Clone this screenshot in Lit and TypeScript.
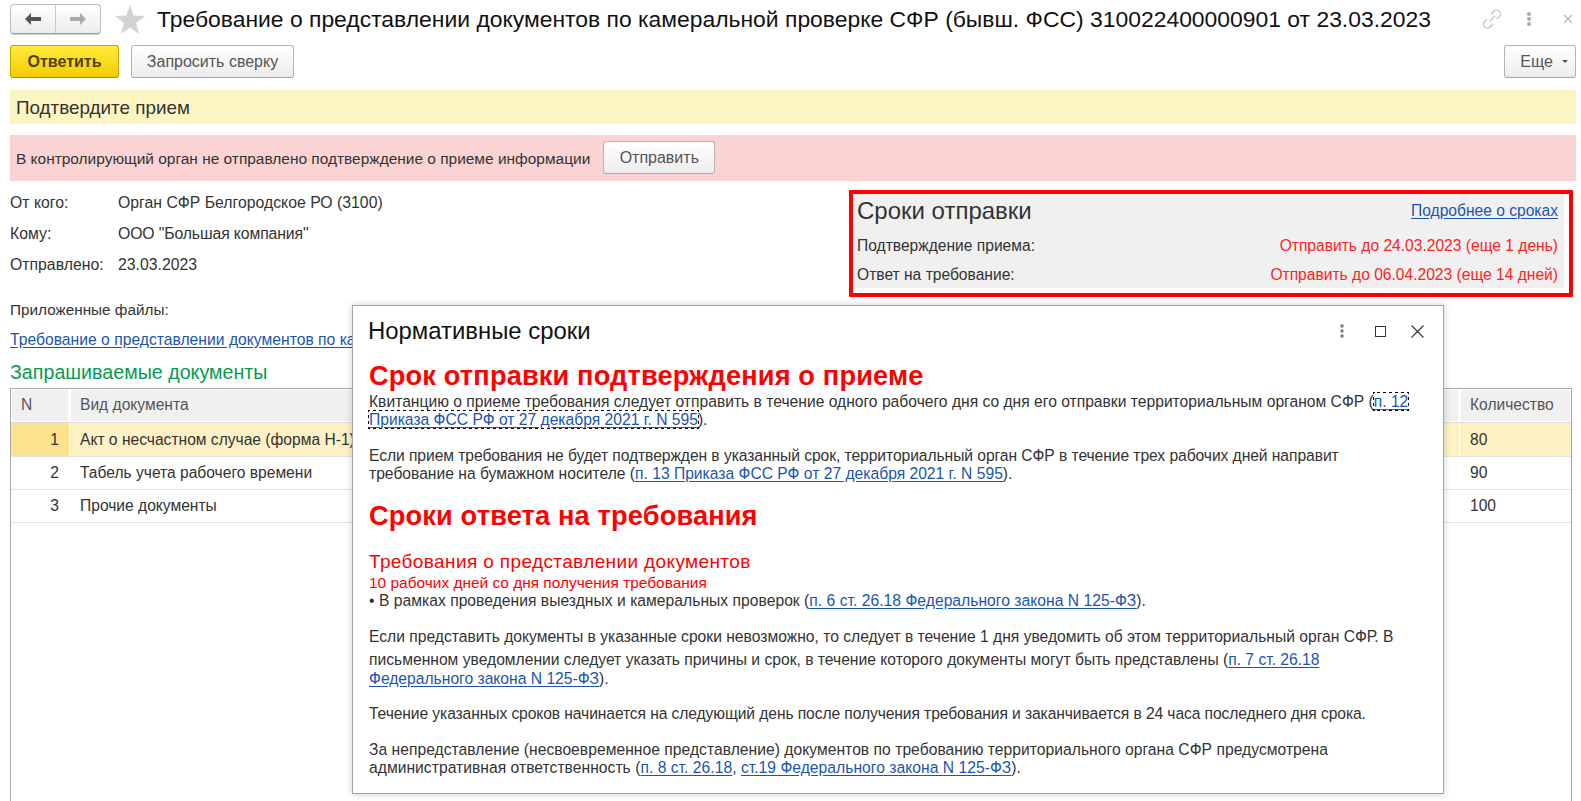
import { LitElement, html, css } from "lit";
import { customElement } from "lit/decorators.js";

@customElement("app-root")
export class AppRoot extends LitElement {
  static styles = css`
    :host { display: block; position: relative; width: 1581px; height: 801px; overflow: hidden; background: #fff; font-family: "Liberation Sans", Arial, sans-serif; color: #333; font-size: 15.6px; }
    .page { display: flex; flex-direction: column; height: 801px; padding: 4px 5px 0 10px; box-sizing: border-box; }
    a { color: #1b55b0; text-decoration: underline; text-underline-offset: 2px; }
    .titlebar { display: flex; align-items: center; height: 30px; }
    .nav { display: flex; width: 91px; height: 30px; box-sizing: border-box; border: 1px solid #bcbcbc; border-bottom-color: #a0a0a0; border-radius: 4px; background: linear-gradient(#fff, #ececec); box-shadow: 0 1px 0 #ccc; }
    .nav span { flex: 1; display: flex; align-items: center; justify-content: center; }
    .nav span + span { border-left: 1px solid #c8c8c8; }
    .star { margin-left: 14px; }
    .title { margin-left: 12px; font-size: 22.9px; color: #111; white-space: nowrap; flex: 1; }
    .ticons { display: flex; align-items: center; margin-right: 3px; }
    .ticons .dots { margin: 0 31px 0 24px; }
    .actions { display: flex; align-items: center; gap: 12px; margin-top: 11px; height: 33px; }
    .btn { box-sizing: border-box; height: 33px; display: flex; align-items: center; justify-content: center; border: 1px solid #b5b5b5; border-bottom-color: #a5a5a5; border-radius: 3px; background: linear-gradient(#fff, #ededed); color: #555; font-size: 16px; }
    .btn.primary { width: 109px; background: linear-gradient(#ffec3d, #f2cc00); border-color: #c4a400; border-bottom-color: #a88c00; color: #4d4300; font-weight: 700; }
    .btn.req { width: 163px; }
    .btn.send { width: 112px; height: 33px; margin-top: -2px; }
    .btn.more { width: 72px; gap: 9px; margin-left: auto; padding-left: 8px; }
    .caret { width: 0; height: 0; border-left: 3px solid transparent; border-right: 3px solid transparent; border-top: 3px solid #555; }
    .confirm { margin-top: 12px; height: 34px; box-sizing: border-box; display: flex; align-items: center; padding: 1px 0 0 6px; background: #fdf5c1; font-size: 18.85px; }
    .warn { margin-top: 11px; height: 46px; box-sizing: border-box; display: flex; align-items: center; padding: 1px 0 0 6px; gap: 13px; background: #fbd3d3; font-size: 15.46px; }
    .mid { display: flex; justify-content: space-between; margin-top: 6px; height: 110px; }
    .fields { display: grid; grid-template-columns: 108px auto; grid-auto-rows: 31px; align-items: center; align-content: start; font-size: 15.8px; }
    .quoted { letter-spacing: -.13px; }
    .deadline { width: 724px; height: 107px; box-sizing: border-box; border: 4px solid #f00; border-radius: 1px; background: #fff; margin: 3px 3px 0 0; padding: 0 5px 5px 1px; }
    .deadline-in { height: 100%; background: #f0f0f0; padding: 0 6px 0 3px; display: grid; grid-template-columns: auto auto; justify-content: space-between; align-items: center; grid-template-rows: 33px 37px 22px; font-size: 15.6px; }
    .deadline h3 { margin: 0; font-weight: 400; font-size: 24px; }
    .deadline a { justify-self: end; }
    .red { color: #f22; text-align: right; }
    .files { margin-top: 4px; font-size: 15.3px; line-height: 18px; }
    .attach { margin-top: 11px; line-height: 20px; height: 20px; font-size: 15.7px; white-space: nowrap; }
    .section { margin-top: 11px; color: #069a50; font-size: 19.66px; line-height: 22px; }
    .table { flex: 1; margin: 5px 4px 0 0; box-sizing: border-box; border: 1px solid #a8a8a8; border-bottom: 0; font-size: 15.6px; }
    .row { display: grid; grid-template-columns: 58px 1fr 112px; height: 33px; box-sizing: border-box; border-bottom: 1px solid #e2e2e2; align-items: stretch; }
    .row > div { display: flex; align-items: center; padding-left: 10px; }
    .row > div + div { border-left: 1px solid #fff; }
    .row.head { height: 34px; border-bottom: 1px solid #d8d8d8; color: #555; }
    .row.head > div { background: #f0f0f0; box-shadow: inset 0 0 0 1px #fff; padding-bottom: 2px; }
    .row > .num { justify-content: flex-end; padding: 0 10px 0 0; }
    .row.head > .num { justify-content: flex-start; padding: 0 0 2px 10px; }
    .row.sel { height: 34px; }
    .row.sel > div { background: #fdf1c5; }
    .row.sel > .num { background: #fde28e; }
    .modal { position: absolute; left: 352px; top: 305px; width: 1092px; height: 489px; box-sizing: border-box; padding: 0 15px 0 16px; background: #fff; border: 1px solid #a6a6a6; box-shadow: 0 0 7px rgba(0,0,0,.2); font-size: 15.65px; line-height: 18px; color: #333; }
    .mhead { display: flex; align-items: center; height: 50px; }
    .mhead .mtitle { flex: 1; margin-left: -1px; font-size: 23.9px; color: #111; }
    .micons { display: flex; align-items: center; margin-right: 4px; }
    .micons .dots { margin-right: 30px; }
    .micons .max { margin-right: 25px; }
    h2 { margin: 0; color: #f00; font-size: 27.2px; line-height: 33px; font-weight: 700; letter-spacing: .15px; }
    .h1a { margin: 3px 0 1px; }
    p { margin: 0; white-space: nowrap; }
    .gap { margin-top: 18px; }
    .h1b { margin-top: 16px; }
    .sub { margin-top: 19px; color: #f00; font-size: 19px; line-height: 22px; letter-spacing: .38px; }
    .redline { color: #f00; font-size: 15.45px; line-height: 19px; }
    .tall { margin-top: 17px; line-height: 20px; }
    .tall span { display: block; }
    .tall .l2 { margin-top: 3px; }
    .tall .l3 { margin-top: -1px; }
    .after-tall { margin-top: 16px; }
    .tighter { letter-spacing: -.07px; }
    .tightest { letter-spacing: -.1px; }
    .wider { letter-spacing: .03px; }
    .focus { outline: 1px dotted #000; }
  `;

  render() {
    return html`
      <div class="page">
        <div class="titlebar">
          <div class="nav">
            <span><svg width="18" height="14" viewBox="0 0 18 14"><path d="M1 7l6-6v4h10v4H7v4z" fill="#555"/></svg></span>
            <span><svg width="18" height="14" viewBox="0 0 18 14"><path d="M17 7l-6-6v4H1v4h10v4z" fill="#aaa"/></svg></span>
          </div>
          <svg class="star" width="30" height="29" viewBox="0 0 30 29"><path d="M15 0l3.700 10.600L30 11l-9 6.900L24.300 29 15 22.500 5.700 29 9 17.900 0 11l11.300-.4z" fill="#d3d3d3"/></svg>
          <div class="title">Требование о представлении документов по камеральной проверке СФР (бывш. ФСС) 310022400000901 от 23.03.2023</div>
          <div class="ticons">
            <svg width="20" height="20" viewBox="0 0 20 20" fill="none" stroke="#c4c4c4" stroke-width="1.300"><path d="M8 12l5-5"/><path d="M9 5l2.500-2.500a3.500 3.500 0 0 1 6 5L15 10"/><path d="M11 15l-2.500 2.500a3.500 3.500 0 0 1-6-5L5 10"/></svg>
            <svg class="dots" width="6" height="14" viewBox="0 0 6 14" fill="#aaa"><circle cx="3" cy="2" r="2"/><circle cx="3" cy="7" r="2"/><circle cx="3" cy="12" r="2"/></svg>
            <svg width="10" height="10" viewBox="0 0 10 10" stroke="#bbb" stroke-width="1.400"><path d="M1 1l8 8M9 1l-8 8"/></svg>
          </div>
        </div>
        <div class="actions">
          <div class="btn primary">Ответить</div>
          <div class="btn req">Запросить сверку</div>
          <div class="btn more">Еще <span class="caret"></span></div>
        </div>
        <div class="confirm">Подтвердите прием</div>
        <div class="warn">В контролирующий орган не отправлено подтверждение о приеме информации <div class="btn send">Отправить</div></div>
        <div class="mid">
          <div class="fields">
            <span>От кого:</span><span>Орган СФР Белгородское РО (3100)</span>
            <span>Кому:</span><span class="quoted">ООО "Большая компания"</span>
            <span>Отправлено:</span><span>23.03.2023</span>
          </div>
          <div class="deadline"><div class="deadline-in">
            <h3>Сроки отправки</h3><a href="#">Подробнее о сроках</a>
            <span>Подтверждение приема:</span><span class="red">Отправить до 24.03.2023 (еще 1 день)</span>
            <span>Ответ на требование:</span><span class="red">Отправить до 06.04.2023 (еще 14 дней)</span>
          </div></div>
        </div>
        <div class="files">Приложенные файлы:</div>
        <div class="attach"><a href="#">Требование о представлении документов по ка</a></div>
        <div class="section">Запрашиваемые документы</div>
        <div class="table">
          <div class="row head"><div class="num">N</div><div>Вид документа</div><div>Количество</div></div>
          <div class="row sel"><div class="num">1</div><div>Акт о несчастном случае (форма Н-1)</div><div>80</div></div>
          <div class="row"><div class="num">2</div><div>Табель учета рабочего времени</div><div>90</div></div>
          <div class="row"><div class="num">3</div><div>Прочие документы</div><div>100</div></div>
        </div>
      </div>
      <div class="modal">
        <div class="mhead">
          <div class="mtitle">Нормативные сроки</div>
          <div class="micons">
            <svg class="dots" width="6" height="14" viewBox="0 0 6 14" fill="#777"><circle cx="3" cy="2" r="1.700"/><circle cx="3" cy="7" r="1.700"/><circle cx="3" cy="12" r="1.700"/></svg>
            <svg class="max" width="11" height="11" viewBox="0 0 11 11" fill="none" stroke="#333"><rect x=".5" y=".5" width="10" height="10"/></svg>
            <svg width="13" height="13" viewBox="0 0 13 13" stroke="#333" stroke-width="1.100"><path d="M.5.5l12 12M12.500.5l-12 12"/></svg>
          </div>
        </div>
        <h2 class="h1a">Срок отправки подтверждения о приеме</h2>
        <p>Квитанцию о приеме требования следует отправить в течение одного рабочего дня со дня его отправки территориальным органом СФР (<a class="focus" href="#">п. 12<br>Приказа ФСС РФ от 27 декабря 2021 г. N 595</a>).</p>
        <p class="gap"><span class="tighter">Если прием требования не будет подтвержден в указанный срок, территориальный орган СФР в течение трех рабочих дней направит</span><br>требование на бумажном носителе (<a href="#">п. 13 Приказа ФСС РФ от 27 декабря 2021 г. N 595</a>).</p>
        <h2 class="h1b">Сроки ответа на требования</h2>
        <div class="sub">Требования о представлении документов</div>
        <div class="redline">10 рабочих дней со дня получения требования</div>
        <p class="wider">• В рамках проведения выездных и камеральных проверок (<a href="#">п. 6 ст. 26.18 Федерального закона N 125-ФЗ</a>).</p>
        <p class="tall"><span>Если представить документы в указанные сроки невозможно, то следует в течение 1 дня уведомить об этом территориальный орган СФР. В</span><span class="l2">письменном уведомлении следует указать причины и срок, в течение которого документы могут быть представлены (<a href="#">п. 7 ст. 26.18</a></span><span class="l3"><a href="#">Федерального закона N 125-ФЗ</a>).</span></p>
        <p class="after-tall tightest">Течение указанных сроков начинается на следующий день после получения требования и заканчивается в 24 часа последнего дня срока.</p>
        <p class="gap wider">За непредставление (несвоевременное представление) документов по требованию территориального органа СФР предусмотрена<br>административная ответственность (<a href="#">п. 8 ст. 26.18</a>, <a href="#">ст.19 Федерального закона N 125-ФЗ</a>).</p>
      </div>
    `;
  }
}
